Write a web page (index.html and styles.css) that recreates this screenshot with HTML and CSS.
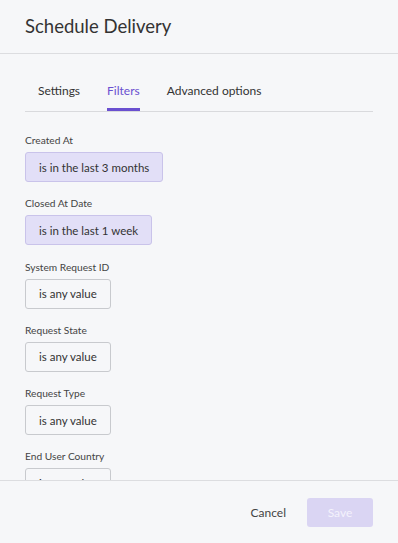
FILE: index.html
```html
<!DOCTYPE html>
<html lang="en">
<head>
  <meta charset="UTF-8">
  <meta name="viewport" content="width=device-width, initial-scale=1.0">
  <title>Schedule Delivery</title>
  <link rel="stylesheet" href="styles.css">
</head>
<body>
  <div class="modal">
    <header>
      <h1>Schedule Delivery</h1>
    </header>

    <main class="content">
      <nav class="tabs">
        <a href="#">Settings</a>
        <a href="#" class="active">Filters</a>
        <a href="#">Advanced options</a>
      </nav>

      <div class="filters">
        <div class="field">
          <label>Created At</label>
          <span class="chip set">is in the last 3 months</span>
        </div>
        <div class="field">
          <label>Closed At Date</label>
          <span class="chip set">is in the last 1 week</span>
        </div>
        <div class="field">
          <label>System Request ID</label>
          <span class="chip">is any value</span>
        </div>
        <div class="field">
          <label>Request State</label>
          <span class="chip">is any value</span>
        </div>
        <div class="field">
          <label>Request Type</label>
          <span class="chip">is any value</span>
        </div>
        <div class="field">
          <label>End User Country</label>
          <span class="chip">is any value</span>
        </div>
      </div>
    </main>

    <footer>
      <button class="cancel-btn">Cancel</button>
      <button class="save-btn" disabled>Save</button>
    </footer>
  </div>
</body>
</html>
```
FILE: styles.css
```css
body {
  margin: 0;
  font-family: 'Lato', 'Noto Sans', sans-serif;
  background-color: #f6f7f9;
  color: #333;
}
.modal {
  height: 543px;
  display: flex;
  flex-direction: column;
}
header {
  height: 53px;
  border-bottom: 1px solid #dcdde0;
  display: flex;
  align-items: center;
  padding: 0 25px;
  flex-shrink: 0;
}
header h1 {
  margin: 0;
  font-size: 18.5px;
  font-weight: 400;
  color: #333;
  position: relative;
  top: -1px;
}
.content {
  flex: 1;
  overflow: hidden;
  padding: 0 25px;
}
.tabs {
  margin-top: 28px;
  display: flex;
  border-bottom: 1px solid #d9dadd;
  padding-left: 13px;
}
.tabs a {
  margin-right: 27px;
  font-size: 12px;
  line-height: 18px;
  padding-bottom: 8px;
  border-bottom: 3px solid transparent;
  color: #333;
  text-decoration: none;
}
.tabs a.active {
  color: #6a50d0;
  border-bottom-color: #6a50d0;
  border-radius: 2px 2px 0 0;
}
.filters {
  padding-top: 21px;
}
.field {
  margin-bottom: 14.3px;
}
.field label {
  display: block;
  font-size: 10.2px;
  line-height: 14px;
  color: #444;
  margin-bottom: 5px;
}
.chip {
  display: inline-flex;
  align-items: center;
  box-sizing: border-box;
  height: 30px;
  padding: 0 13px;
  font-size: 11.5px;
  color: #333;
  border: 1px solid #c8cace;
  border-radius: 3px;
}
.chip.set {
  background-color: #e2dff7;
  border-color: #c9c3ea;
}
footer {
  height: 62px;
  border-top: 1px solid #dcdde0;
  display: flex;
  align-items: center;
  justify-content: flex-end;
  padding: 0 25px;
  flex-shrink: 0;
  gap: 21px;
}
footer button {
  font-family: inherit;
  font-size: 12px;
  border: none;
  border-radius: 3px;
  cursor: pointer;
}
.cancel-btn {
  background: none;
  color: #444;
  padding: 0;
}
.save-btn {
  width: 66px;
  height: 29px;
  background-color: #dad5f3;
  color: #f4f2fc;
}
```
